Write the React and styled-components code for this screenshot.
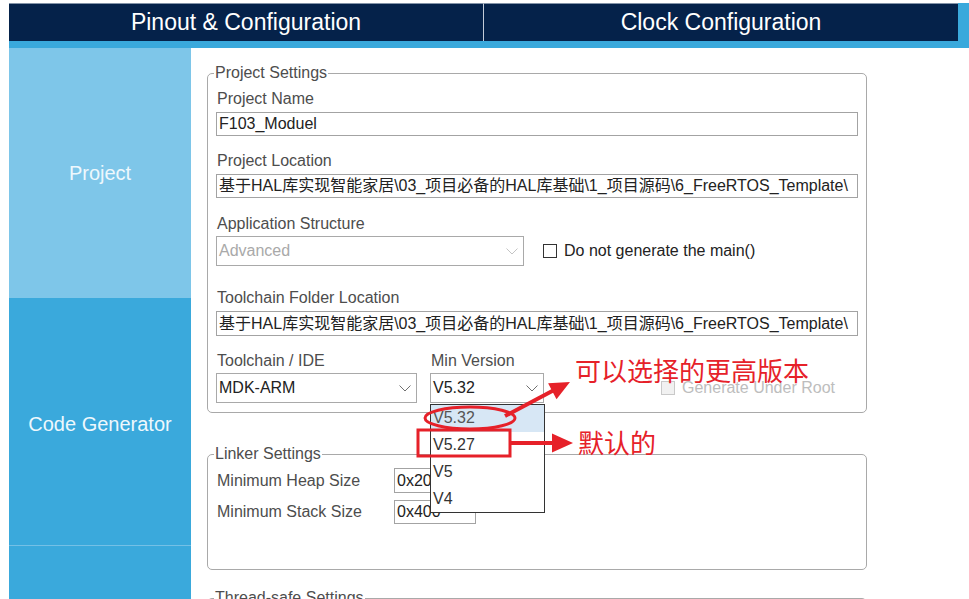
import React from 'react';
import styled, { createGlobalStyle } from 'styled-components';

const GlobalStyle = createGlobalStyle`
  html, body {
    margin: 0;
    padding: 0;
    background: #fff;
    overflow: hidden;
  }
  * { box-sizing: border-box; }
`;

const Page = styled.div`
  position: relative;
  width: 969px;
  height: 599px;
  overflow: hidden;
  display: flex;
  flex-direction: column;
  font-family: 'Liberation Sans', Arial, 'Noto Sans CJK SC', sans-serif;
`;

const TopBar = styled.div`
  display: flex;
  margin: 3px 0 0 9px;
  padding: 0 11px 7px 0;
  background: #3aa9dc;
`;

const TopTab = styled.div`
  flex: 1;
  height: 38px;
  display: flex;
  align-items: center;
  justify-content: center;
  background: #05224a;
  border-top: 1px solid #8393a8;
  color: #fff;
  font-size: 23px;
  & + & {
    border-left: 1px solid #c3ccd8;
  }
`;

const Main = styled.div`
  flex: 1;
  min-height: 0;
  display: flex;
  margin-left: 9px;
`;

const Sidebar = styled.div`
  width: 182px;
  display: flex;
  flex-direction: column;
`;

const SideTab = styled.div`
  flex: ${props => (props.height ? `0 0 ${props.height}px` : '1')};
  display: flex;
  align-items: center;
  justify-content: center;
  padding-top: ${props => props.shift || 0}px;
  background: ${props => (props.active ? '#7ec6e9' : '#3aa9dc')};
  border-top: ${props => (props.divided ? '1px solid #74c0e6' : 'none')};
  color: #eef8fd;
  font-size: 20px;
`;

const Content = styled.div`
  flex: 1;
  padding: 16px 0 0 16px;
`;

const Group = styled.fieldset`
  width: 660px;
  margin: ${props => props.top || 0}px 0 0;
  padding: 0 8px ${props => props.bottom || 0}px 8px;
  border: 1px solid #a9a9a9;
  border-radius: 5px;
  min-inline-size: 0;
`;

const Legend = styled.legend`
  margin-left: -2px;
  padding: 0 1px;
  font-size: 16px;
  line-height: 18px;
  color: #4d4d4d;
`;

const Label = styled.div`
  margin-top: ${props => props.top || 0}px;
  padding-left: 1px;
  font-size: 16px;
  line-height: 18px;
  color: #4d4d4d;
  white-space: nowrap;
`;

const TextBox = styled.div`
  width: ${props => props.width || 642}px;
  height: ${props => props.height || 24}px;
  margin-top: ${props => props.top || 0}px;
  padding: 0 2px;
  border: 1px solid #a3a3a3;
  font-family: 'Liberation Sans', Arial, 'Noto Sans CJK SC', sans-serif;
  font-size: 16px;
  line-height: ${props => (props.height || 24) - 2}px;
  color: #222;
  white-space: nowrap;
  overflow: hidden;
`;

const SelectBox = styled.div`
  width: ${props => props.width}px;
  height: 30px;
  margin-top: ${props => props.top || 0}px;
  display: flex;
  align-items: center;
  justify-content: space-between;
  padding: 0 5px 0 2px;
  border: 1px solid #a9a9a9;
  font-size: 16px;
  color: ${props => (props.disabled ? '#a9a9a9' : '#222')};
`;

const Row = styled.div`
  display: flex;
  align-items: ${props => props.align || 'center'};
  margin-top: ${props => props.top || 0}px;
`;

const Column = styled.div`
  position: relative;
  margin-left: ${props => props.left || 0}px;
`;

const CheckItem = styled.label`
  display: flex;
  align-items: center;
  height: 30px;
  margin-left: ${props => props.left || 0}px;
  font-size: 16px;
  color: ${props => (props.disabled ? '#bdbdbd' : '#222')};
`;

const CheckBox = styled.span`
  width: 14px;
  height: 14px;
  margin-right: 7px;
  border: 1px solid ${props => (props.disabled ? '#c9c9c9' : '#333')};
  background: ${props => (props.disabled ? '#f1f1f1' : '#fff')};
`;

const FieldLabel = styled.div`
  width: 178px;
  padding-left: 1px;
  font-size: 16px;
  color: #4d4d4d;
`;

const DropList = styled.ul`
  position: absolute;
  top: 52px;
  left: 0;
  z-index: 2;
  width: 115px;
  margin: 0;
  padding: 0;
  list-style: none;
  background: #fff;
  border: 1px solid #333;
`;

const DropItem = styled.li`
  height: 26.75px;
  padding-left: 2px;
  display: flex;
  align-items: center;
  font-size: 16px;
  color: ${props => (props.selected ? '#555' : '#333')};
  background: ${props => (props.selected ? '#d7e7f5' : '#fff')};
`;

const Overlay = styled.svg`
  position: absolute;
  top: 0;
  left: 0;
  z-index: 5;
  pointer-events: none;
`;

const Callout = styled.span`
  position: absolute;
  z-index: 6;
  left: ${props => props.x}px;
  top: ${props => props.y}px;
  font-family: 'Noto Sans CJK SC', sans-serif;
  font-size: 26px;
  line-height: 30px;
  color: #e62129;
  white-space: nowrap;
`;

const Chevron = ({ color = '#707070' }) => (
  <svg width="12" height="7" viewBox="0 0 12 7">
    <polyline points="0.5,0.5 6,6 11.5,0.5" fill="none" stroke={color} strokeWidth="1" />
  </svg>
);

const path = '基于HAL库实现智能家居\\03_项目必备的HAL库基础\\1_项目源码\\6_FreeRTOS_Template\\';
const versions = ['V5.32', 'V5.27', 'V5', 'V4'];

const App = () => (
  <Page>
    <GlobalStyle />
    <TopBar>
      <TopTab>Pinout &amp; Configuration</TopTab>
      <TopTab>Clock Configuration</TopTab>
    </TopBar>
    <Main>
      <Sidebar>
        <SideTab active height={250}>Project</SideTab>
        <SideTab height={247} shift={5}>Code Generator</SideTab>
        <SideTab divided />
      </Sidebar>
      <Content>
        <Group bottom={9}>
          <Legend>Project Settings</Legend>
          <Label top={8}>Project Name</Label>
          <TextBox top={4}>F103_Moduel</TextBox>
          <Label top={16}>Project Location</Label>
          <TextBox top={4}>{path}</TextBox>
          <Label top={17}>Application Structure</Label>
          <Row top={3}>
            <SelectBox width={308} disabled>
              Advanced
              <Chevron color="#c4c4c4" />
            </SelectBox>
            <CheckItem left={19}>
              <CheckBox />
              Do not generate the main()
            </CheckItem>
          </Row>
          <Label top={23}>Toolchain Folder Location</Label>
          <TextBox top={4} height={25}>{path}</TextBox>
          <Row top={16} align="flex-end">
            <Column>
              <Label>Toolchain / IDE</Label>
              <SelectBox width={201} top={3}>
                MDK-ARM
                <Chevron />
              </SelectBox>
            </Column>
            <Column left={13}>
              <Label>Min Version</Label>
              <SelectBox width={114} top={3}>
                V5.32
                <Chevron />
              </SelectBox>
              <DropList>
                {versions.map((v, i) => (
                  <DropItem key={v} selected={i === 0}>{v}</DropItem>
                ))}
              </DropList>
            </Column>
            <CheckItem left={117} disabled>
              <CheckBox disabled />
              Generate Under Root
            </CheckItem>
          </Row>
        </Group>

        <Group top={32} bottom={45}>
          <Legend>Linker Settings</Legend>
          <Row top={5}>
            <FieldLabel>Minimum Heap Size</FieldLabel>
            <TextBox width={82} height={25}>0x200</TextBox>
          </Row>
          <Row top={7}>
            <FieldLabel>Minimum Stack Size</FieldLabel>
            <TextBox width={82} height={24}>0x400</TextBox>
          </Row>
        </Group>

        <Group top={19} bottom={40}>
          <Legend>Thread-safe Settings</Legend>
        </Group>
      </Content>
    </Main>

    <Overlay width="969" height="599" viewBox="0 0 969 599">
      <g stroke="#e62129" fill="none" strokeWidth="3">
        <ellipse cx="470" cy="418" rx="45" ry="11" />
        <rect x="418" y="430" width="92" height="26" />
        <line x1="505" y1="416" x2="556" y2="389" strokeWidth="4" />
        <line x1="510" y1="443" x2="554" y2="443" strokeWidth="4" />
      </g>
      <g fill="#e62129">
        <polygon points="570,382 556.5,399.3 548.1,383.3" />
        <polygon points="573,443 552,433.5 552,452.5" />
      </g>
    </Overlay>
    <Callout x={575} y={355}>可以选择的更高版本</Callout>
    <Callout x={578} y={427}>默认的</Callout>
  </Page>
);

export default App;
